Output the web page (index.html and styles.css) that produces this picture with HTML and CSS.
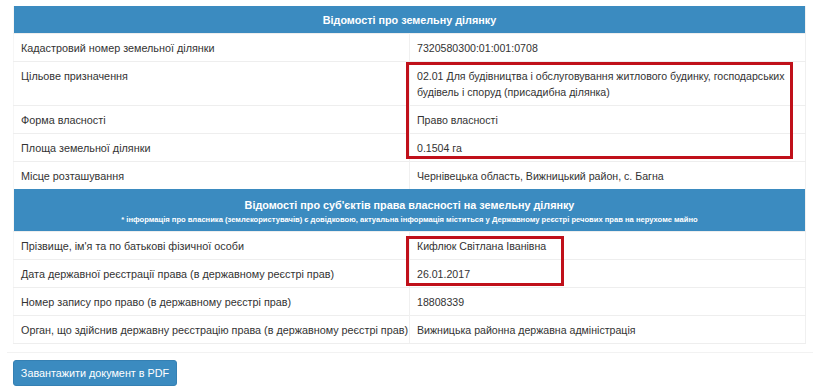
FILE: index.html
```html
<!DOCTYPE html>
<html lang="uk">
<head>
<meta charset="utf-8">
<link rel="stylesheet" href="styles.css">
</head>
<body>
<div class="page">
  <div class="panel">
    <table class="info">
      <tr class="head"><th colspan="2">Відомості про земельну ділянку</th></tr>
      <tr><td class="k">Кадастровий номер земельної ділянки</td><td>7320580300:01:001:0708</td></tr>
      <tr><td class="k">Цільове призначення</td><td>02.01 Для будівництва і обслуговування житлового будинку, господарських будівель і споруд (присадибна ділянка)</td></tr>
      <tr><td class="k">Форма власності</td><td>Право власності</td></tr>
      <tr><td class="k">Площа земельної ділянки</td><td>0.1504 га</td></tr>
      <tr><td class="k">Місце розташування</td><td>Чернівецька область, Вижницький район, с. Багна</td></tr>
      <tr class="head head2"><th colspan="2"><div class="title">Відомості про суб'єктів права власності на земельну ділянку</div><div class="note">* інформація про власника (землекористувачів) є довідковою, актуальна інформація міститься у Державному реєстрі речових прав на нерухоме майно</div></th></tr>
      <tr><td class="k">Прізвище, ім'я та по батькові фізичної особи</td><td>Кифлюк Світлана Іванівна</td></tr>
      <tr><td class="k">Дата державної реєстрації права (в державному реєстрі прав)</td><td>26.01.2017</td></tr>
      <tr><td class="k">Номер запису про право (в державному реєстрі прав)</td><td>18808339</td></tr>
      <tr><td class="k">Орган, що здійснив державну реєстрацію права (в державному реєстрі прав)</td><td>Вижницька районна державна адміністрація</td></tr>
    </table>
    <div class="mark mark1"></div>
    <div class="mark mark2"></div>
  </div>
  <div class="rule"></div>
  <button class="btn">Завантажити документ в PDF</button>
</div>
</body>
</html>
```
FILE: styles.css
```css
html, body { margin: 0; padding: 0; background: #fff; }
body { font-family: "Liberation Sans", Arial, sans-serif; font-size: 10.8px; color: #333; }
.page { padding: 6px 0 0 13px; width: 793px; }
.panel { position: relative; }
.info { width: 793px; border-collapse: collapse; table-layout: fixed; border-right: 1px solid #f0f0f0; border-left: 1px solid #f6f6f6; }
.info td { padding: 6px 4px 5px 7px; line-height: 16px; vertical-align: top; border-top: 1px solid #eeeeee; font-size: 10.6px; }
.info td.k { width: 384px; border-right: 1px solid #f0f0f0; white-space: nowrap; font-size: 10.8px; }
.info tr:last-child td { border-bottom: 1px solid #eeeeee; }
.head th { background: #3b8bc0; color: #fff; font-weight: bold; text-align: center; height: 27px; padding: 0; line-height: 16px; }
.head2 th { height: 42px; padding: 0; }
.head2 .title { padding-top: 7px; line-height: 16px; }
.head2 .note { font-size: 7.6px; line-height: 10px; padding: 2px 0 6px; }
.mark { position: absolute; border: 3px solid #c0101a; box-sizing: border-box; }
.mark1 { left: 393px; top: 56px; width: 387px; height: 97px; }
.mark2 { left: 393px; top: 230px; width: 158px; height: 50px; }
.rule { height: 1px; background: #f2f2f2; margin: 8px 0 0 -6px; width: 806px; }
.btn { display: block; margin-top: 7px; width: 164px; height: 26px; background: #3b8bc0; color: #fff; border: 1px solid #3580b3; border-radius: 3px; font-family: "Liberation Sans", Arial, sans-serif; font-size: 10.8px; padding: 0; white-space: nowrap; cursor: pointer; }
```
